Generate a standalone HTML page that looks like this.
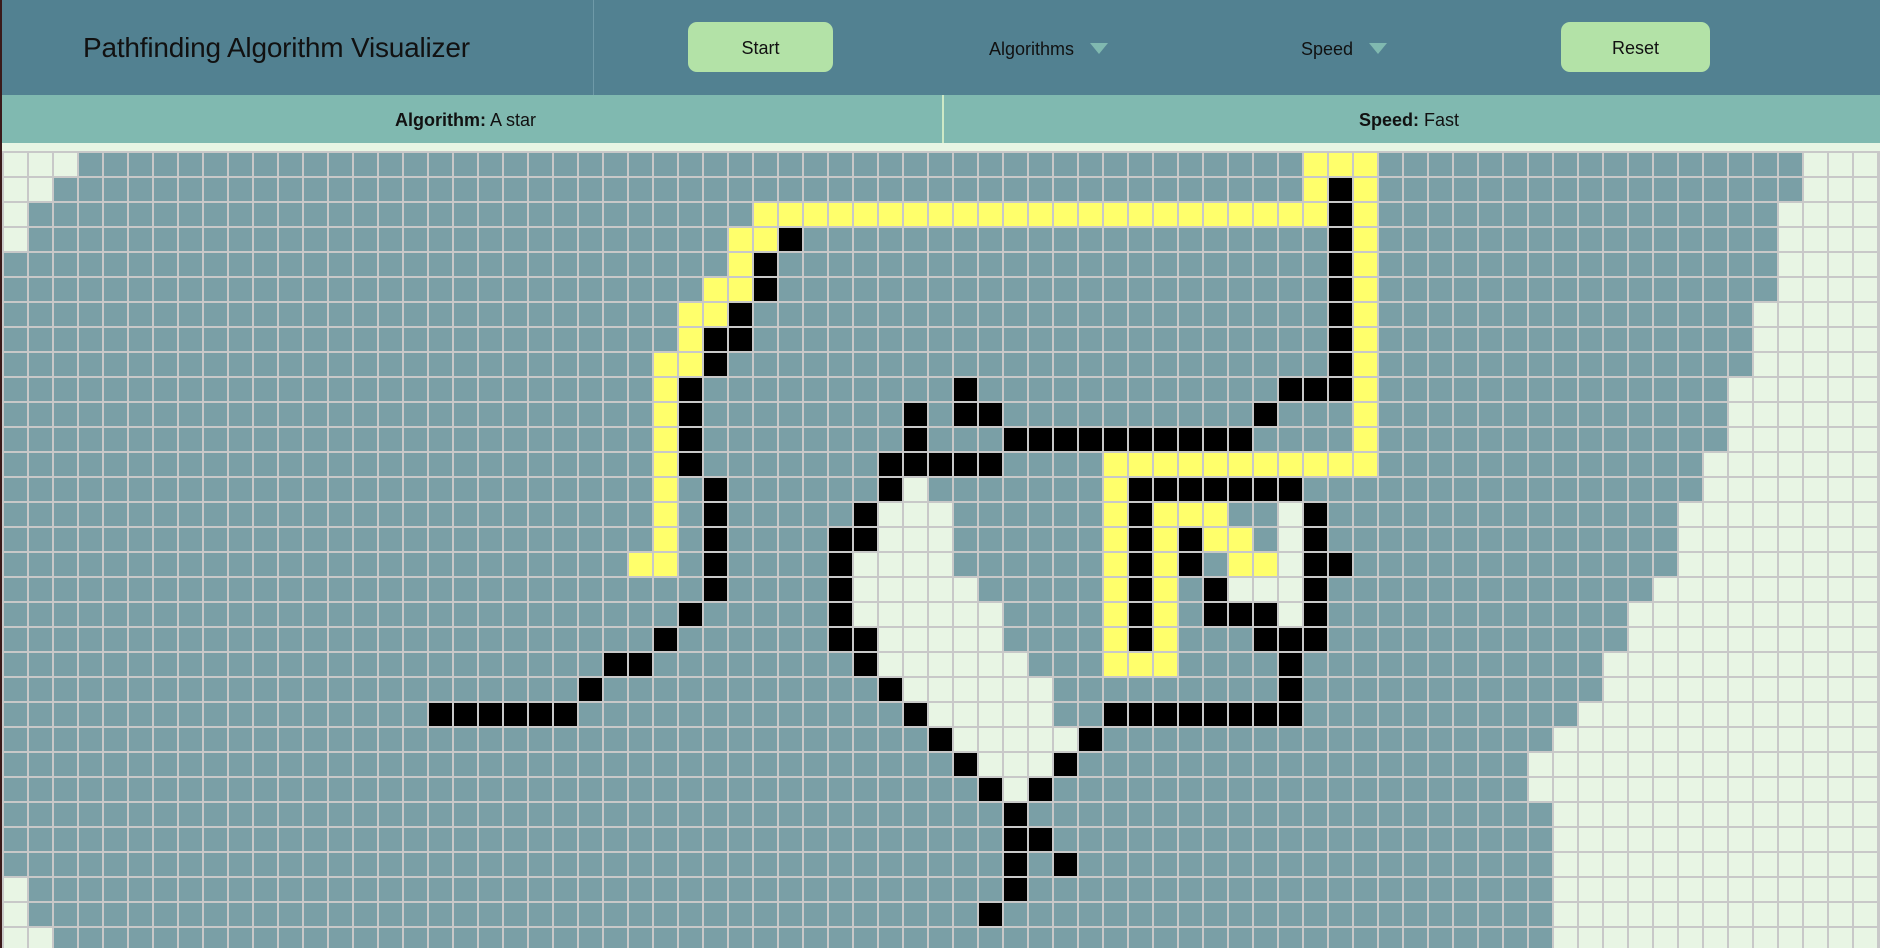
<!DOCTYPE html>
<html><head><meta charset="utf-8">
<style>
*{margin:0;padding:0;box-sizing:border-box}
html,body{width:1880px;height:948px;overflow:hidden;background:#e8f5e4;font-family:"Liberation Sans",sans-serif}
#hdr{position:absolute;left:0;top:0;width:1880px;height:95px;background:#528191}
#title{position:absolute;left:83px;top:32px;font-size:28px;color:#111;letter-spacing:-0.2px}
#vdiv{position:absolute;left:593px;top:0;width:1px;height:95px;background:#6f9aa8}
.btn{position:absolute;top:22px;height:50px;background:#b3e2a7;border-radius:9px;font-size:18px;color:#111;text-align:center;line-height:52px}
.dd{position:absolute;top:39px;font-size:18px;color:#111}
.tri{display:inline-block;width:0;height:0;border-left:9px solid transparent;border-right:9px solid transparent;border-top:11px solid #80b9b0;margin-left:16px;vertical-align:1px}
#info{position:absolute;left:0;top:95px;width:1880px;height:48px;background:#80b9b0;font-size:18px;color:#111}
#info div{position:absolute;top:15px}
#idiv{position:absolute;left:942px;top:95px;width:2px;height:48px;background:#cde9c6}
#lb{position:absolute;left:0;top:0;width:2px;height:948px;background:#3a1a1a}
#grid{position:absolute;left:2px;top:151px;width:1878px;height:797px;background:#c8c8c8;overflow:hidden}
.c{position:absolute;width:23px;height:23px;background:#7a9fa6}
.Y{background:#ffff6b}.B{background:#000}.W{background:#e8f5e4}
</style></head><body>
<div id="hdr">
<div id="title">Pathfinding Algorithm Visualizer</div>
<div id="vdiv"></div>
<div class="btn" style="left:688px;width:145px">Start</div>
<div class="dd" style="left:989px">Algorithms<span class="tri"></span></div>
<div class="dd" style="left:1301px">Speed<span class="tri"></span></div>
<div class="btn" style="left:1561px;width:149px">Reset</div>
</div>
<div id="info">
<div style="left:395px"><b>Algorithm:</b> A star</div>
<div style="left:1359px"><b>Speed:</b> Fast</div>
</div>
<div id="idiv"></div>
<div id="grid"></div>
<div id="lb"></div>
<script>
var R={
0:"W0-2 Y52-54 W72-74",
1:"W0-1 Y52 B53 Y54 W72-74",
2:"W0 Y30-52 B53 Y54 W71-74",
3:"W0 Y29-30 B31 B53 Y54 W71-74",
4:"Y29 B30 B53 Y54 W71-74",
5:"Y28-29 B30 B53 Y54 W71-74",
6:"Y27-28 B29 B53 Y54 W70-74",
7:"Y27 B28-29 B53 Y54 W70-74",
8:"Y26-27 B28 B53 Y54 W70-74",
9:"Y26 B27 B38 B51-53 Y54 W69-74",
10:"Y26 B27 B36 B38-39 B50 Y54 W69-74",
11:"Y26 B27 B36 B40-49 Y54 W69-74",
12:"Y26 B27 B35-39 Y44-54 W68-74",
13:"Y26 B28 B35 W36 Y44 B45-51 W68-74",
14:"Y26 B28 B34 W35-37 Y44 B45 Y46-48 W51 B52 W67-74",
15:"Y26 B28 B33-34 W35-37 Y44 B45 Y46 B47 Y48-49 W51 B52 W67-74",
16:"Y25-26 B28 B33 W34-37 Y44 B45 Y46 B47 Y49-50 W51 B52-53 W67-74",
17:"B28 B33 W34-38 Y44 B45 Y46 B48 W49-51 B52 W66-74",
18:"B27 B33 W34-39 Y44 B45 Y46 B48-50 W51 B52 W65-74",
19:"B26 B33-34 W35-39 Y44 B45 Y46 B50-52 W65-74",
20:"B24-25 B34 W35-40 Y44-46 B51 W64-74",
21:"B23 B35 W36-41 B51 W64-74",
22:"B17-22 B36 W37-41 B44-51 W63-74",
23:"B37 W38-42 B43 W62-74",
24:"B38 W39-41 B42 W61-74",
25:"B39 W40 B41 W61-74",
26:"B40 W62-74",
27:"B40-41 W62-74",
28:"B40 B42 W62-74",
29:"W0 B40 W62-74",
30:"W0 B39 W62-74",
31:"W0-1 W62-74"};
var g=document.getElementById('grid'),h='';
for(var r=0;r<32;r++){var t=[];for(var c=0;c<75;c++)t[c]='';
(R[r]||'').split(' ').forEach(function(s){if(!s)return;var k=s[0],p=s.slice(1).split('-'),a=+p[0],b=p.length>1?+p[1]:a;for(var i=a;i<=b;i++)t[i]=k;});
for(var c=0;c<75;c++)h+='<div class="c '+t[c]+'" style="left:'+(2+25*c)+'px;top:'+(2+25*r)+'px"></div>';}
g.innerHTML=h;
</script>
</body></html>
